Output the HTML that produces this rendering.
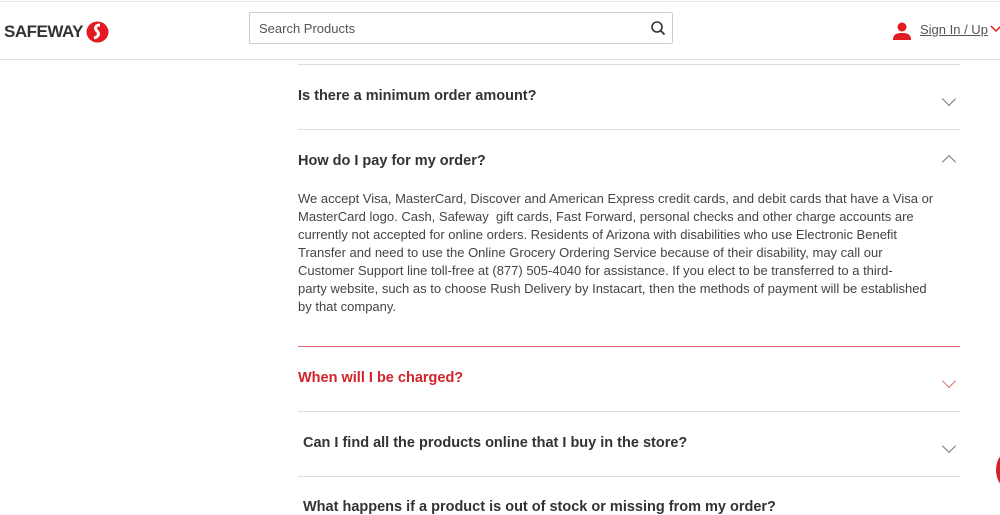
<!DOCTYPE html><html><head><style>
body{margin:0;width:1000px;height:506px;overflow:hidden;background:#fff;font-family:"Liberation Sans",sans-serif;position:relative}
.hdr{position:absolute;top:1px;left:0;width:1000px;height:57px;border-top:1px solid #e6e6e6;border-bottom:1px solid #e2e2e2}
.logo{position:absolute;left:4px;top:20px;font-weight:bold;font-size:17px;color:#333;letter-spacing:-0.5px}
.search{position:absolute;left:249px;top:10px;width:422px;height:30px;border:1px solid #ccc;border-radius:2px}
.search span{position:absolute;left:9px;top:8px;font-size:13px;color:#555}
.sign{position:absolute;left:920px;top:20px;font-size:13px;color:#555;text-decoration:underline}
.line{position:absolute;left:298px;width:662px;height:1px;background:#ddd}
.q{position:absolute;left:298px;font-weight:bold;font-size:14.5px;color:#333}
.chev{position:absolute;left:944px;width:9px;height:9px;border-right:1px solid #777;border-bottom:1px solid #777;transform:rotate(45deg)}
.p{position:absolute;left:298px;top:190px;font-size:13px;line-height:18px;color:#444;white-space:nowrap}
</style></head><body>
<div class="hdr">
<div class="logo">SAFEWAY</div>
<svg style="position:absolute;left:86px;top:19px" width="23" height="22" viewBox="0 0 23 22"><ellipse cx="11.5" cy="11" rx="11" ry="10.5" fill="#e21b23"/><path d="M14 4c-4 0-6 3-3 6s1 6-3 7" stroke="#fff" stroke-width="3" fill="none"/></svg>
<div class="search"><span>Search Products</span>
<svg style="position:absolute;right:6px;top:8px" width="15" height="15" viewBox="0 0 15 15"><circle cx="6" cy="6" r="5" stroke="#333" stroke-width="1.6" fill="none"/><path d="M9.5 9.5l4 4" stroke="#333" stroke-width="1.8"/></svg></div>
<svg style="position:absolute;left:892px;top:20px" width="20" height="18" viewBox="0 0 20 18"><circle cx="10" cy="5" r="4.5" fill="#e21b23"/><path d="M1 18c0-6 4-7 9-7s9 1 9 7z" fill="#e21b23"/></svg>
<div class="sign">Sign In / Up</div>
<svg style="position:absolute;left:990px;top:23px" width="10" height="8"><path d="M1 1l5 5 5-5" stroke="#e21b23" stroke-width="1.5" fill="none"/></svg>
</div>
<div class="line" style="top:64px"></div>
<div class="q" style="top:88px">Is there a minimum order amount?</div>
<div class="chev" style="top:94px"></div>
<div class="line" style="top:129px"></div>
<div class="q" style="top:153px">How do I pay for my order?</div>
<div class="chev" style="top:157px;transform:rotate(225deg)"></div>
<div class="p">We accept Visa, MasterCard, Discover and American Express credit cards, and debit cards that have a Visa or<br>MasterCard logo. Cash, Safeway&nbsp; gift cards, Fast Forward, personal checks and other charge accounts are<br>currently not accepted for online orders. Residents of Arizona with disabilities who use Electronic Benefit<br>Transfer and need to use the Online Grocery Ordering Service because of their disability, may call our<br>Customer Support line toll-free at (877) 505-4040 for assistance. If you elect to be transferred to a third-<br>party website, such as to choose Rush Delivery by Instacart, then the methods of payment will be established<br>by that company.</div>
<div class="line" style="top:346px;background:#d9676b"></div>
<div class="q" style="top:370px;color:#d0232a">When will I be charged?</div>
<div class="chev" style="top:376px;border-color:#e07070"></div>
<div class="line" style="top:411px"></div>
<div class="q" style="top:435px;left:303px">Can I find all the products online that I buy in the store?</div>
<div class="chev" style="top:441px"></div>
<div class="line" style="top:476px"></div>
<div class="q" style="top:499px;left:303px">What happens if a product is out of stock or missing from my order?</div>
<div style="position:absolute;left:996px;top:450px;width:30px;height:40px;border-radius:50%;background:#d0232a"></div>
</body></html>
